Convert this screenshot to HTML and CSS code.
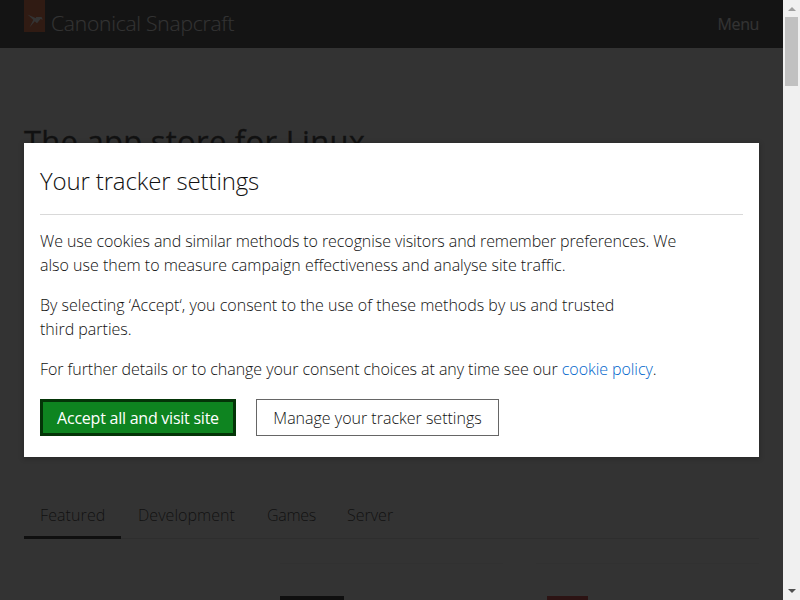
FILE: index.html
```
<!DOCTYPE html>
<html lang="en">
<head>
  <meta charset="UTF-8">
  <meta name="viewport" content="width=device-width, initial-scale=1.0">
  <title>Snapcraft</title>
  <link rel="stylesheet" href="styles.css">
</head>
<body>
  <div class="page">
    <header class="navigation">
      <a class="logo" href="#">
        <svg class="logo-tag" width="21" height="32" viewBox="0 0 21 32">
          <path fill="#e95420" d="M0 0h21v32H0z"/>
          <path fill="#fff" d="M3.500 14.500l9.500 4.300v4.400zM10.800 21.200L5.500 27.500l4-8zM12 17h5.500l1.300 2.800-2.300-.8-3.500 4.200z"/>
        </svg>
        <span class="logo-text">Canonical Snapcraft</span>
      </a>
      <a class="menu" href="#">Menu</a>
    </header>

    <main class="content">
      <h1>The app store for Linux</h1>
      <nav class="tabs">
        <a class="tab active" href="#">Featured</a>
        <a class="tab development" href="#">Development</a>
        <a class="tab games" href="#">Games</a>
        <a class="tab server" href="#">Server</a>
      </nav>
      <div class="snaps">
        <div class="snap"><div class="snap-icon black"></div></div>
        <div class="snap"><div class="snap-icon red"></div></div>
      </div>
    </main>

    <div class="overlay">
      <div class="modal">
        <h2>Your tracker settings</h2>
        <p class="intro">We use cookies and similar methods to recognise visitors and remember preferences. We<br>
        <span class="effect">also use them to measure campaign effectiveness and analyse site traffic.</span></p>
        <p>By selecting ‘Accept‘, you consent to the use of these methods by us and trusted<br>
        third parties.</p>
        <p class="details">For further details or to change your consent choices at any time see our <a href="#">cookie policy</a>.</p>
        <div class="buttons">
          <button class="button positive">Accept all and visit site</button>
          <button class="button neutral">Manage your tracker settings</button>
        </div>
      </div>
    </div>
  </div>

  <div class="scrollbar">
    <i class="arrow up"></i>
    <div class="thumb"></div>
    <i class="arrow down"></i>
  </div>
</body>
</html>
```
FILE: styles.css
```
* {box-sizing: border-box;}
body {display: flex; width: 800px; height: 600px; margin: 0; overflow: hidden; color: #111; font: 300 16px/24px "Open Sans", "Noto Sans", sans-serif; white-space: nowrap;}
a {color: inherit; text-decoration: none;}
.page {position: relative; width: 783px; height: 600px; overflow: hidden; background: #fff;}

.navigation {display: flex; justify-content: space-between; height: 48px; padding: 0 24px; background: #262626; color: #fff;}
.logo {display: flex; gap: 6px;}
.logo-text {font-size: 21px; line-height: 46px; font-weight: 350; letter-spacing: -.22px;}
.menu {line-height: 49px; font-weight: 400; letter-spacing: -.4px;}

.content {padding: 0 24px;}
h1 {height: 40px; margin: 73px 0 331px; font-size: 31px; line-height: 40px; font-weight: 500; letter-spacing: .25px; -webkit-text-stroke: .3px #111;}
.tabs {display: flex; height: 47px; border-bottom: 1px solid #d9d9d9;}
.tab {height: 47px; padding: 11px 16px;}
.active {width: 97px; border-bottom: 3px solid #000; letter-spacing: .1px;}
.development {width: 130px; padding-left: 17px; letter-spacing: .05px;}
.games {width: 80px; letter-spacing: -.3px;}
.snaps {display: flex; gap: 33px; margin: 24px 0 0 256px;}
.snap {width: 223px; height: 60px; padding-top: 32px; border-top: 1px solid #eee;}
.snap-icon {width: 64px; height: 28px;}
.black {background: #000;}
.red {width: 41px; margin-left: 11px; background: #c22;}

.overlay {position: absolute; inset: 0; display: flex; align-items: center; padding: 0 24px; background: rgba(17, 17, 17, .86);}
.modal {width: 735px; height: 314px; padding: 16px; background: #fff; box-shadow: 0 1px 5px 1px rgba(0, 0, 0, .2);}
h2 {height: 56px; margin: 0 0 14px; border-bottom: 1px solid #d9d9d9; font-size: 24px; line-height: 44px; font-weight: 300; letter-spacing: -.14px;}
p {margin: 0 0 16px;}
p a {color: #06c;}
.intro {letter-spacing: -.085px;}
.effect {letter-spacing: 0;}
.details {letter-spacing: -.06px;}
.buttons {display: flex; gap: 20px; margin-top: 18px;}
.button {height: 37px; padding: 0; border: 1px solid #666; border-radius: 0; background: #fff; color: #111; font: inherit;}
.positive {width: 196px; border: 3px solid #043508; background: #0e8420; color: #fff; font-weight: 400; letter-spacing: -.24px;}
.neutral {width: 243px;}

.scrollbar {display: flex; flex-direction: column; align-items: center; width: 17px; height: 600px; padding: 7px 0; background: #f0f0f0;}
.arrow {width: 0; height: 0; border: 4px solid transparent;}
.up {border-top: 0; border-bottom-color: #a0a0a0;}
.thumb {width: 13px; height: 69px; margin: 6px 0 auto; background: #c1c1c1;}
.down {border-bottom: 0; border-top-color: #505050;}
```
